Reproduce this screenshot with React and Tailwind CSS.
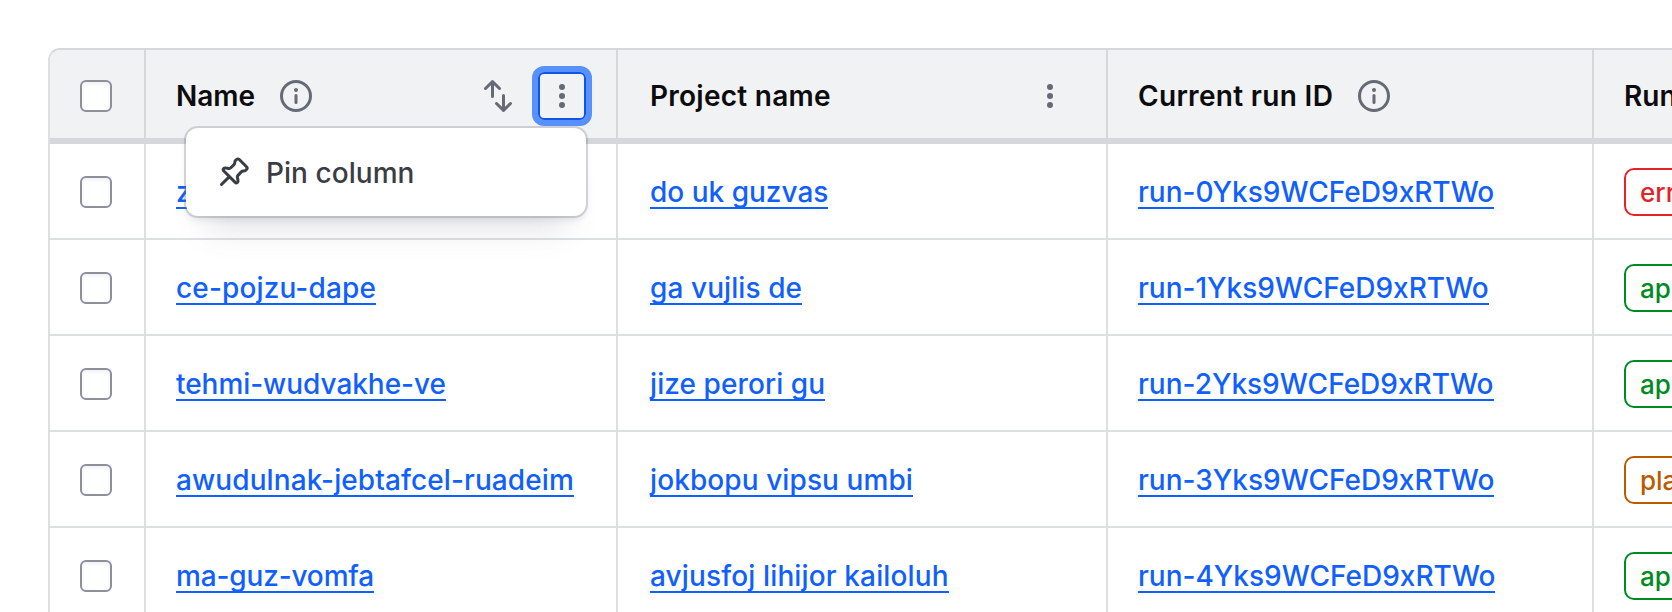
const rows = [
  ["zu-hunsa-wi", "do uk guzvas", "run-0Yks9WCFeD9xRTWo", "errored", "text-[#e52228] border-[#e52228]", "", ""],
  ["ce-pojzu-dape", "ga vujlis de", "run-1Yks9WCFeD9xRTWo", "applied", "text-[#008a22] border-[#008a22]", "tracking-[0.14px]", "tracking-[0.08px]"],
  ["tehmi-wudvakhe-ve", "jize perori gu", "run-2Yks9WCFeD9xRTWo", "applied", "text-[#008a22] border-[#008a22]", "tracking-[-0.05px]", "tracking-[0.08px]"],
  ["awudulnak-jebtafcel-ruadeim", "jokbopu vipsu umbi", "run-3Yks9WCFeD9xRTWo", "planned", "text-[#bb5a00] border-[#bb5a00]", "tracking-[0.1px]", "tracking-[0.09px]"],
  ["ma-guz-vomfa", "avjusfoj lihijor kailoluh", "run-4Yks9WCFeD9xRTWo", "applied", "text-[#008a22] border-[#008a22]", "tracking-[-0.15px]", "tracking-[0.13px]"],
];

const COLS = "grid grid-cols-[96px_472px_490px_486px_480px]";

function Checkbox() {
  return (
    <span className="block size-8 rounded-[6px] border-2 border-[#8c909c] bg-white shadow-[inset_0_2px_4px_#656a761a]" />
  );
}

function Info() {
  return (
    <svg className="size-8 shrink-0 text-[#656a76]" viewBox="0 0 16 16" fill="currentColor">
      <circle cx="8" cy="8" r="7.25" fill="none" stroke="currentColor" strokeWidth="1.5" />
      <circle cx="8" cy="5" r="1" />
      <rect x="7.25" y="7" width="1.5" height="5" rx=".75" />
    </svg>
  );
}

function Sort() {
  return (
    <svg className="size-8 text-[#656a76]" viewBox="0 0 16 16" fill="none" stroke="currentColor" strokeWidth="1.5" strokeLinecap="round" strokeLinejoin="round">
      <path d="M1.75 4.25 5.25.85l3.5 3.4M5.25 1v7.25M7.25 11.75l3.5 3.4 3.5-3.4M10.75 15V7.75" />
    </svg>
  );
}

function Dots() {
  return (
    <svg className="size-8 text-[#656a76]" viewBox="0 0 16 16" fill="currentColor">
      <circle cx="8" cy="3.5" r="1.5" />
      <circle cx="8" cy="8" r="1.5" />
      <circle cx="8" cy="12.5" r="1.5" />
    </svg>
  );
}

function Pin() {
  return (
    <svg className="size-8 text-[#3b3d45]" viewBox="0 0 16 16" fill="none" stroke="currentColor" strokeWidth="1.5" strokeLinecap="round" strokeLinejoin="round">
      <path d="M1.75 14.25 5.2 10.8M9.25 1.75c.4-.4 1-.4 1.4 0l3.6 3.6c.4.4.4 1 0 1.4l-.5.5c-.3.3-.7.3-1.1.3-.4 0-.7.1-1 .4L10 9.7c-.3.3-.4.6-.3 1l.3 1.5c.1.4 0 .7-.3 1s-.8.3-1.1 0L2.8 7.4c-.3-.3-.3-.8 0-1.1s.7-.4 1.1-.3l1.5.2c.4.1.7 0 1-.3L8 4.3c.3-.3.4-.6.4-1 0-.4 0-.8.3-1z" />
    </svg>
  );
}

function Link({ children, spacing = "" }) {
  return (
    <a className={`flex h-[35px] items-center whitespace-nowrap border-b-2 border-[#1060ff] pt-[3px] text-[28px] font-medium leading-[32px] text-[#1060ff] ${spacing}`}>{children}</a>
  );
}

export default function App() {
  return (
    <div className="h-[612px] w-[1672px] overflow-hidden bg-white pl-12 pt-12 font-['Inter',sans-serif]">
      <div className="w-[2100px] rounded-tl-[12px] border-l-2 border-t-2 border-[#dedfe3] border-t-[#d5d7db]">
        <div className={`${COLS} h-[94px] rounded-tl-[10px] border-b-[6px] border-[#d5d7db] bg-[#f1f2f3] text-[28px] font-semibold text-[#0c0c0e]`}>
          <div className="flex items-center border-r-2 border-[#d5d7db] pl-[30px] pt-1"><Checkbox /></div>
          <div className="relative flex items-center border-r-2 border-[#d5d7db] pl-[30px] pr-[30px] pt-1">
            <span>Name</span>
            <span className="ml-[25px]"><Info /></span>
            <span className="ml-auto mr-[24px]"><Sort /></span>
            <button className="flex size-12 items-center justify-center rounded-[6px] border-2 border-[#0c56e9] shadow-[0_0_0_6px_#5990ff]"><Dots /></button>
            <div className="absolute left-[40px] top-[78px] flex h-[88px] w-[400px] items-center rounded-[12px] bg-white pl-8 text-[28px] text-[#3b3d45] shadow-[0_0_0_2px_#656a7640,0_4px_6px_#656a7626,0_32px_32px_-20px_#656a7633]">
              <Pin />
              <span className="ml-4 pt-px font-medium tracking-[0.05px]">Pin column</span>
            </div>
          </div>
          <div className="flex items-center justify-between border-r-2 border-[#d5d7db] pl-8 pr-10 pt-1">
            <span className="tracking-[0.25px]">Project name</span>
            <Dots />
          </div>
          <div className="flex items-center border-r-2 border-[#d5d7db] pl-[30px] pt-1">
            <span className="tracking-[0.32px]">Current run ID</span>
            <span className="ml-[25px]"><Info /></span>
          </div>
          <div className="flex items-center whitespace-nowrap pl-[30px] pt-1">Run status</div>
        </div>
        {rows.map(([name, project, run, status, tone, nameSpacing, projectSpacing]) => (
          <div key={name} className={`${COLS} h-24 border-b-2 border-[#dedfe3]`}>
            <div className="flex items-center border-r-2 border-[#dedfe3] pl-[30px] pt-[2px]"><Checkbox /></div>
            <div className="flex items-center border-r-2 border-[#dedfe3] pl-[30px]"><Link spacing={nameSpacing}>{name}</Link></div>
            <div className="flex items-center border-r-2 border-[#dedfe3] pl-8"><Link spacing={projectSpacing}>{project}</Link></div>
            <div className="flex items-center border-r-2 border-[#dedfe3] pl-[30px]"><Link>{run}</Link></div>
            <div className="flex items-center pl-[30px] pt-[2px]">
              <span className={`flex h-12 items-center rounded-[10px] border-2 px-[14px] text-[26px] font-medium ${tone}`}>{status}</span>
            </div>
          </div>
        ))}
      </div>
    </div>
  );
}
